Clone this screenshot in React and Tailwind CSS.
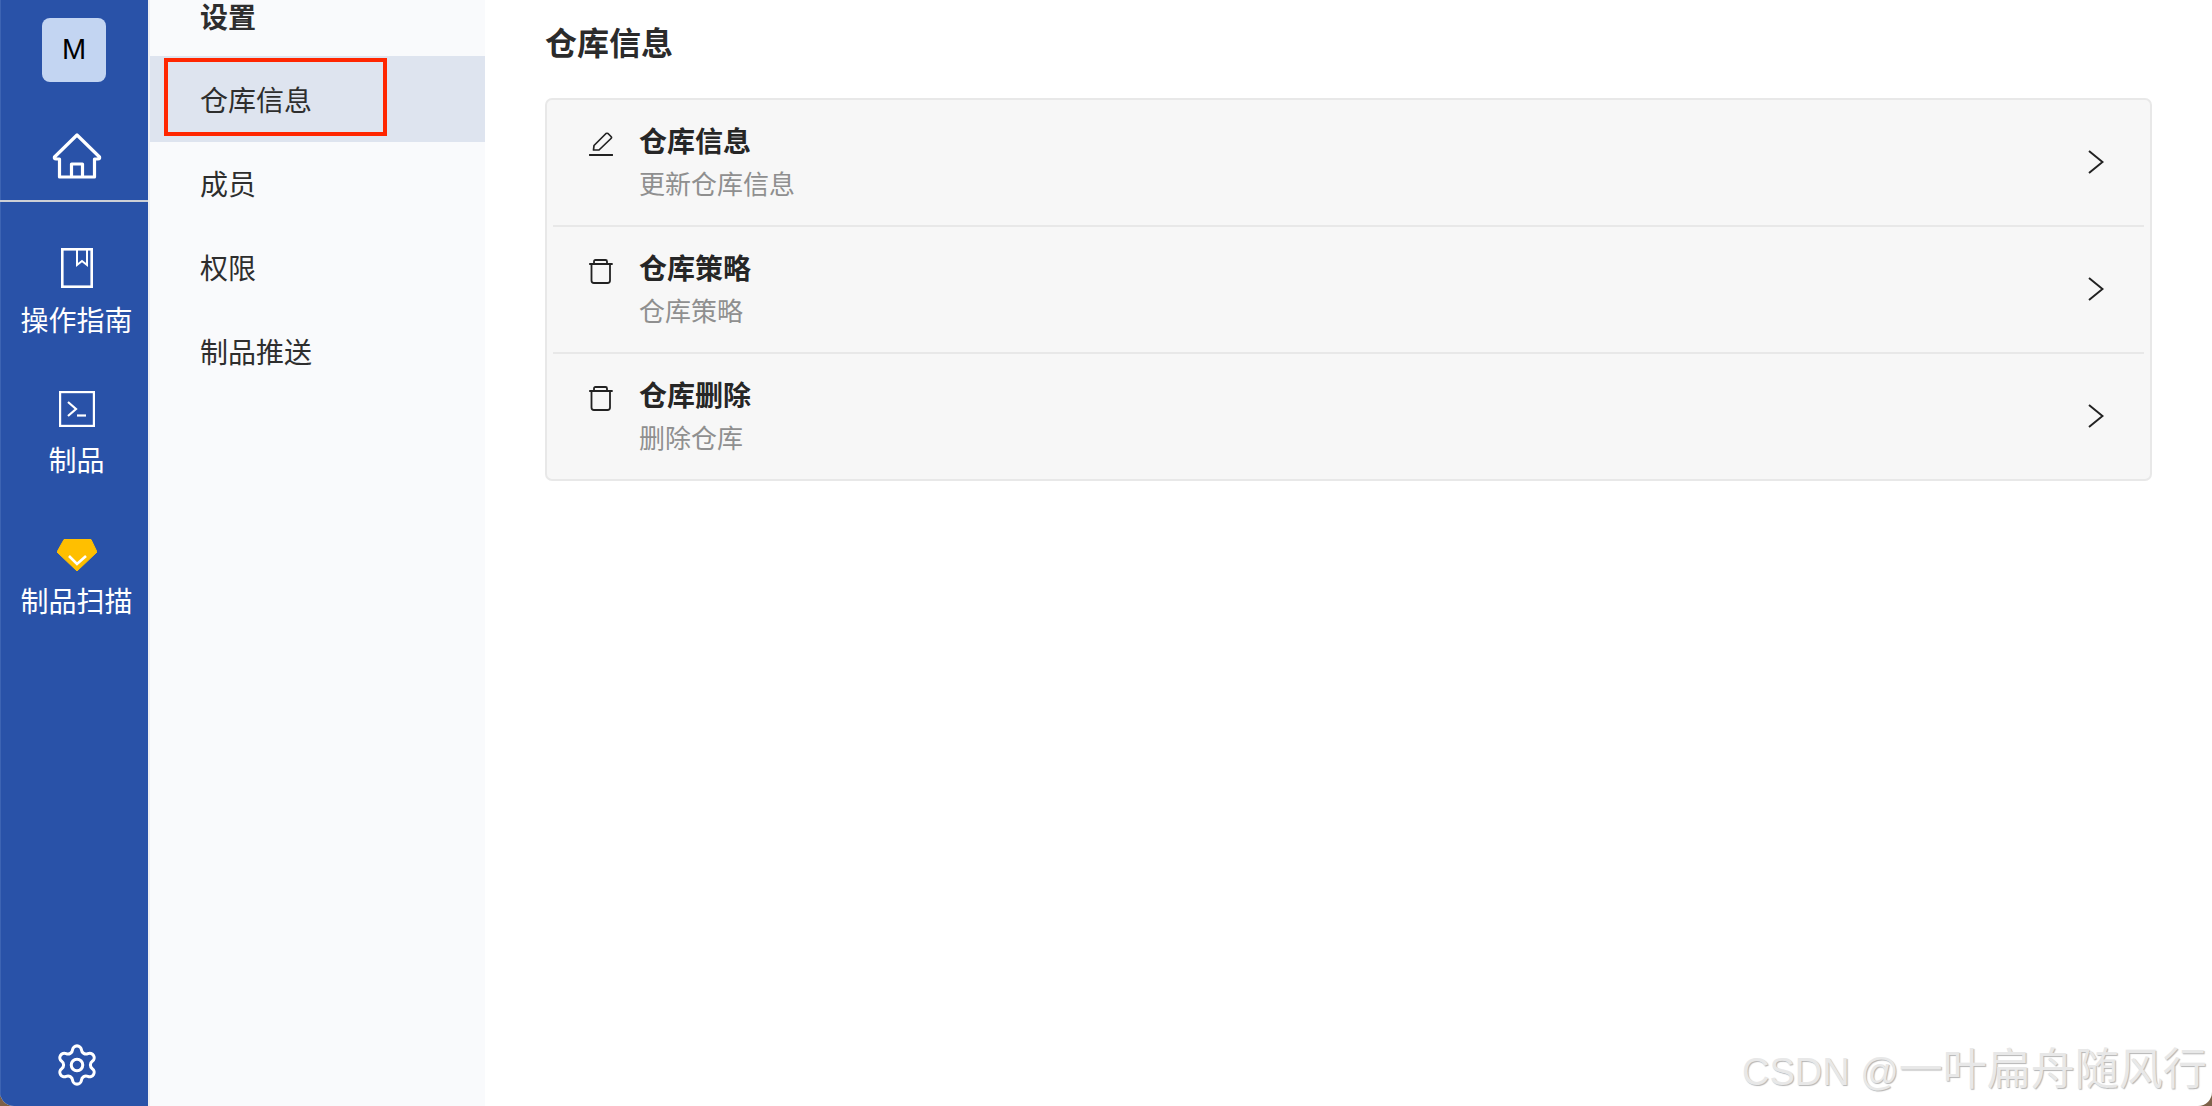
import React from "react";
import { Settings } from "lucide-react";

const cjk = { fontFamily: '"Inter", "Noto Sans CJK SC", sans-serif' };

function NavLabel({ children }) {
  return <div className="text-[28px] leading-[36px] text-white whitespace-nowrap">{children}</div>;
}

function Pen() {
  return (
    <svg width="24" height="24" viewBox="0 0 24 24" fill="none" stroke="#222" strokeWidth="1.7" strokeLinejoin="round" strokeLinecap="round">
      <path d="M4.5 18 L5 13.5 L17 1.5 Q18 1 19 1.5 L22 4.5 Q23 5.5 22 6.5 L10 18 Z" />
      <path d="M0.5 23 H23.5" strokeWidth="1.9" />
    </svg>
  );
}

function Trash() {
  return (
    <svg width="24" height="25" viewBox="0 0 24 25" fill="none" stroke="#222" strokeWidth="1.8" strokeLinejoin="round" strokeLinecap="round">
      <path d="M5 5 V2.5 Q5 1 6.5 1 H16.5 Q18 1 18 2.5 V5" />
      <path d="M0.8 5 H23" />
      <path d="M2.5 5 V21.5 Q2.5 24 5 24 H18.5 Q21 24 21 21.5 V5" />
    </svg>
  );
}

function Row({ icon, iconTop, title, sub, last }) {
  return (
    <div className={`mx-[6px] flex items-start pl-[36px] pr-[40px] ${last ? "h-[125px]" : "h-[127px] border-b-2 border-[#e8e8e8]"}`}>
      <div className={`w-[50px] shrink-0 ${iconTop}`}>{icon}</div>
      <div className="flex-1 pt-[24px]">
        <div className="text-[28px] leading-[36px] font-bold text-[#262626]">{title}</div>
        <div className="text-[26px] leading-[34px] mt-[8px] text-[#8f8f8f]">{sub}</div>
      </div>
      <svg className="mt-[50px]" width="16" height="24" viewBox="0 0 16 24" fill="none" stroke="#222" strokeWidth="2">
        <path d="M1 1 L14.5 12 L1 23" />
      </svg>
    </div>
  );
}

export default function App() {
  return (
    <div className="h-screen w-full bg-[#7d6148] overflow-hidden" style={cjk}>
      <div className="relative h-full flex bg-white rounded-b-[14px] overflow-hidden">
        <aside className="relative w-[148px] shrink-0 h-full bg-[#2952a8] border-l border-[#3d64b3] flex flex-col">
          <div className="pt-[18px] flex justify-center pr-[1px]">
            <div className="w-[64px] h-[64px] rounded-[8px] bg-[#c3d5f2] flex items-center justify-center text-[29px] text-black" style={{ fontFamily: '"Liberation Sans", sans-serif' }}>
              M
            </div>
          </div>
          <div className="mt-[51px] flex justify-center pl-[4px]">
            <svg width="50" height="46" viewBox="0 0 50 46" fill="none" stroke="#fff" strokeWidth="3.2" strokeLinejoin="round">
              <path d="M25 2 L2.5 24 Q2 26 4 26 H7.5 V44 H42.5 V26 H46 Q48 26 47.5 24 Z" />
              <path d="M19.5 44 V31 H30.5 V44" />
            </svg>
          </div>
          <div className="mt-[21px] h-[2px] bg-[#cdd0d6] -ml-px" />
          <div className="mt-[46px] flex flex-col items-center pl-[4px]">
            <svg width="32" height="40" viewBox="0 0 32 40" fill="none" stroke="#fff" strokeWidth="2.6">
              <rect x="1.3" y="1.3" width="29.4" height="37.4" />
              <path d="M16 1.3 V17 L21 13 L26 17 V1.3" strokeWidth="2" />
            </svg>
            <div className="mt-[15px]"><NavLabel>操作指南</NavLabel></div>
            <svg className="mt-[52px]" width="36" height="36" viewBox="0 0 36 36" fill="none" stroke="#fff" strokeWidth="2.2">
              <rect x="1.1" y="1.1" width="33.8" height="33.8" />
              <path d="M9 11 L17 18 L9 25" />
              <path d="M18 24.5 H27" />
            </svg>
            <div className="mt-[16px]"><NavLabel>制品</NavLabel></div>
            <svg className="mt-[60px]" width="40" height="32" viewBox="0 0 40 32" fill="none">
              <path d="M7 0.5 H34 L40 13 L20 32 L0 13 Z" fill="#ffbf00" stroke="#ffbf00" strokeWidth="1" strokeLinejoin="round" />
              <path d="M12 17 L20 25 L29 17" stroke="#fff" strokeWidth="2.6" />
            </svg>
            <div className="mt-[13px]"><NavLabel>制品扫描</NavLabel></div>
          </div>
          <div className="mt-auto pb-[18px] flex justify-center pl-[4px]">
            <Settings size={46} color="#fff" strokeWidth={1.6} />
          </div>
        </aside>
        <div className="w-[2px] shrink-0 bg-[#eeeff2]" />
        <nav className="relative w-[335px] shrink-0 h-full bg-[#f9fafc] text-[28px] text-[#2e2e2e]">
          <div className="h-[56px] pl-[50px] leading-[36px] font-bold">设置</div>
          <div className="h-[86px] pl-[50px] flex items-center pt-[4px] bg-[#dee4ef]">仓库信息</div>
          <div className="h-[84px] pl-[50px] flex items-center pt-[2px]">成员</div>
          <div className="h-[84px] pl-[50px] flex items-center pt-[2px]">权限</div>
          <div className="h-[84px] pl-[50px] flex items-center pt-[2px]">制品推送</div>
          <div className="absolute left-[14px] top-[58px] w-[223px] h-[78px] border-[4px] border-[#ff2600]" />
        </nav>
        <main className="flex-1 min-w-0 pl-[60px] pr-[60px]">
          <h1 className="pt-[24px] h-[98px] text-[32px] leading-[40px] font-bold text-[#2b2b2b]">仓库信息</h1>
          <div className="border-2 border-[#e8e8e8] bg-[#f7f7f7] rounded-[7px]">
            <Row icon={<Pen />} iconTop="pt-[32px]" title="仓库信息" sub="更新仓库信息" />
            <Row icon={<Trash />} iconTop="pt-[32px]" title="仓库策略" sub="仓库策略" />
            <Row icon={<Trash />} iconTop="pt-[32px]" title="仓库删除" sub="删除仓库" last />
          </div>
        </main>
        <div
          className="absolute left-[1742px] top-[1042px] flex items-baseline leading-[56px] whitespace-nowrap text-[#e8e8e8]"
          style={{ fontFamily: '"Liberation Sans", "Noto Sans CJK SC", sans-serif', textShadow: "1px 1px 1px #b5b5b5" }}
        >
          <span className="text-[38px]">CSDN @</span>
          <span className="text-[44px]">一叶扁舟随风行</span>
        </div>
      </div>
    </div>
  );
}
